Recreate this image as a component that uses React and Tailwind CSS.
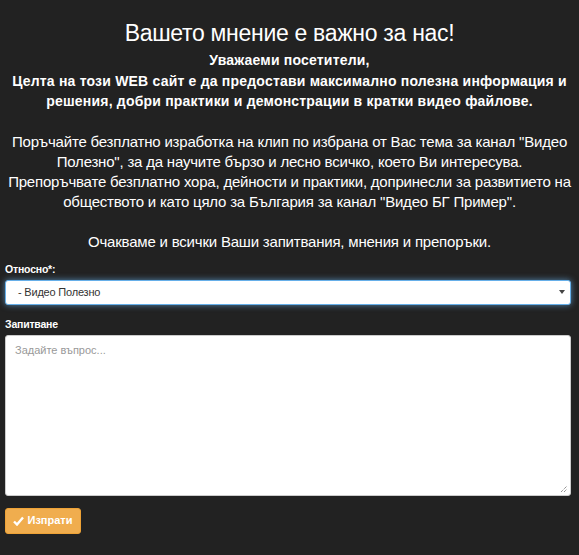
import React from "react";

export default function App() {
  return (
    <div className="min-h-[555px] w-full bg-[#222222] text-white px-[5px] pt-[19px]" style={{ fontFamily: '"Liberation Sans", Arial, sans-serif' }}>
      <h3 className="text-center text-[23px] leading-[28px] font-normal mb-[3px] tracking-[-0.3px]">Вашето мнение е важно за нас!</h3>
      <div className="text-center text-[14px] leading-[20.5px] font-bold tracking-[0.2px]">
        Уважаеми посетители,<br />
        Целта на този WEB сайт е да предостави максимално полезна информация и решения, добри практики и демонстрации в кратки видео файлове.
      </div>
      <div className="text-center text-[15px] leading-[20px] mt-[20px] tracking-[-0.2px]">
        Поръчайте безплатно изработка на клип по избрана от Вас тема за канал "Видео Полезно", за да научите бързо и лесно всичко, което Ви интересува.<br />
        Препоръчвате безплатно хора, дейности и практики, допринесли за развитието на обществото и като цяло за България за канал "Видео БГ Пример".
        <br /><br />
        Очакваме и всички Ваши запитвания, мнения и препоръки.
      </div>
      <div className="mt-[10px] text-[10.5px] font-bold leading-[14px] tracking-[-0.2px]">Относно*:</div>
      <div className="mt-[4px] relative h-[25px] w-[566px] bg-white rounded-[3px] border border-[#66afe9] shadow-[0_0_6px_rgba(102,175,233,0.7)] flex items-center pl-[12px] text-[11px] text-[#333] tracking-[-0.2px]">
        - Видео Полезно
        <span className="absolute right-[5px] top-[9px] w-0 h-0 border-l-[3px] border-r-[3px] border-t-[4px] border-l-transparent border-r-transparent border-t-[#444]"></span>
      </div>
      <div className="mt-[12px] text-[10.5px] font-bold leading-[14px] tracking-[-0.2px]">Запитване</div>
      <div className="mt-[4px] relative h-[161px] w-[566px] bg-white rounded-[3px] border border-[#ccc] px-[9px] pt-[6px] text-[11px] text-[#999]">
        Задайте въпрос...
        <svg className="absolute right-[2px] bottom-[2px]" width="8" height="8" viewBox="0 0 8 8">
          <path d="M1 7 L7 1 M4 7 L7 4" stroke="#666" strokeWidth="1" strokeDasharray="1 1" />
        </svg>
      </div>
      <button className="mt-[12px] h-[26px] w-[76px] rounded-[3px] bg-[#f0ad4e] border border-[#eea236] text-white text-[11px] font-bold flex items-center justify-center gap-[3px]">
        <svg width="11" height="10" viewBox="0 0 11 10"><path d="M1 5.5 L4 8.5 L10 1.5" stroke="white" strokeWidth="2.4" fill="none" /></svg>
        Изпрати
      </button>
    </div>
  );
}
